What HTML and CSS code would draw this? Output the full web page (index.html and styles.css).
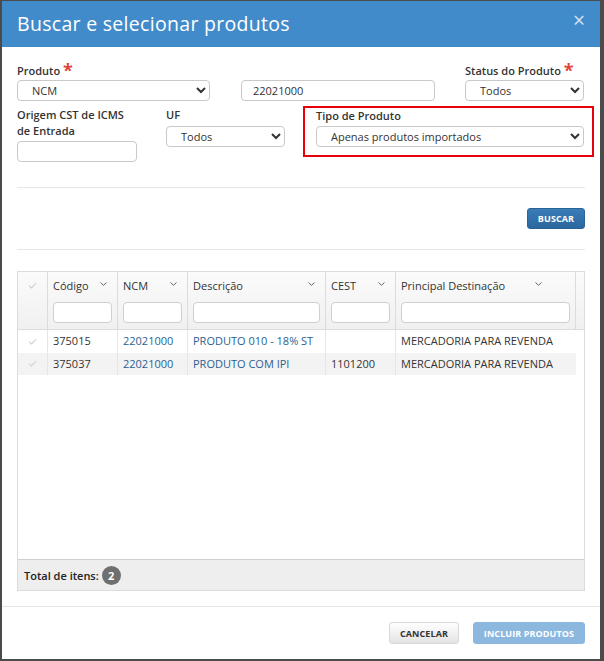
FILE: index.html
```html
<!DOCTYPE html>
<html lang="pt-BR">
<head>
<meta charset="utf-8">
<title>Buscar e selecionar produtos</title>
<link rel="stylesheet" href="styles.css">
</head>
<body>
<div class="modal">
  <div class="modal-header">
    <h1 class="modal-title">Buscar e selecionar produtos</h1>
    <span class="close">&times;</span>
  </div>
  <div class="modal-body">
    <div class="form-row row1">
      <div class="field f-produto">
        <label class="lbl">Produto <span class="req">*</span></label>
        <select class="ctl"><option>NCM</option></select>
      </div>
      <div class="field f-valor">
        <input class="ctl txt" type="text" value="22021000">
      </div>
      <div class="field f-status">
        <label class="lbl">Status do Produto <span class="req">*</span></label>
        <select class="ctl"><option>Todos</option></select>
      </div>
    </div>
    <div class="form-row row2">
      <div class="field f-origem">
        <label class="lbl">Origem CST de ICMS<br>de Entrada</label>
        <input class="ctl txt" type="text">
      </div>
      <div class="field f-uf">
        <label class="lbl">UF</label>
        <select class="ctl"><option>Todos</option></select>
      </div>
      <div class="field f-tipo">
        <label class="lbl">Tipo de Produto</label>
        <select class="ctl"><option>Apenas produtos importados</option></select>
      </div>
    </div>
    <hr class="divider">
    <div class="actions">
      <button class="btn btn-primary">BUSCAR</button>
    </div>
    <hr class="divider">
    <div class="grid">
      <div class="grid-head">
        <div class="hc hc-check"><svg class="chk" viewBox="0 0 10 8" width="9" height="7"><path d="M1 4.2 L3.8 6.8 L9 1.2" fill="none" stroke="#cfcfcf" stroke-width="1.4"/></svg></div>
        <div class="hc"><div class="hc-title"><span>Código</span><svg class="sort" viewBox="0 0 7 4" width="7" height="4"><path d="M0.5 0.5 L3.5 3.3 L6.5 0.5" fill="none" stroke="#666" stroke-width="1"/></svg></div><input class="filter" type="text"></div>
        <div class="hc"><div class="hc-title"><span>NCM</span><svg class="sort" viewBox="0 0 7 4" width="7" height="4"><path d="M0.5 0.5 L3.5 3.3 L6.5 0.5" fill="none" stroke="#666" stroke-width="1"/></svg></div><input class="filter" type="text"></div>
        <div class="hc"><div class="hc-title"><span>Descrição</span><svg class="sort" viewBox="0 0 7 4" width="7" height="4"><path d="M0.5 0.5 L3.5 3.3 L6.5 0.5" fill="none" stroke="#666" stroke-width="1"/></svg></div><input class="filter" type="text"></div>
        <div class="hc"><div class="hc-title"><span>CEST</span><svg class="sort" viewBox="0 0 7 4" width="7" height="4"><path d="M0.5 0.5 L3.5 3.3 L6.5 0.5" fill="none" stroke="#666" stroke-width="1"/></svg></div><input class="filter" type="text"></div>
        <div class="hc hc-wide"><div class="hc-title"><span>Principal Destinação</span><svg class="sort" viewBox="0 0 7 4" width="7" height="4"><path d="M0.5 0.5 L3.5 3.3 L6.5 0.5" fill="none" stroke="#666" stroke-width="1"/></svg></div><input class="filter" type="text"></div>
        <div class="hc hc-scroll"></div>
      </div>
      <div class="grid-body">
        <div class="gr">
          <div class="gc gc-check"><svg class="chk" viewBox="0 0 10 8" width="9" height="7"><path d="M1 4.2 L3.8 6.8 L9 1.2" fill="none" stroke="#d4d4d4" stroke-width="1.4"/></svg></div>
          <div class="gc">375015</div>
          <div class="gc link">22021000</div>
          <div class="gc link">PRODUTO 010 - 18% ST</div>
          <div class="gc"></div>
          <div class="gc">MERCADORIA PARA REVENDA</div>
        </div>
        <div class="gr alt">
          <div class="gc gc-check"><svg class="chk" viewBox="0 0 10 8" width="9" height="7"><path d="M1 4.2 L3.8 6.8 L9 1.2" fill="none" stroke="#d4d4d4" stroke-width="1.4"/></svg></div>
          <div class="gc">375037</div>
          <div class="gc link">22021000</div>
          <div class="gc link">PRODUTO COM IPI</div>
          <div class="gc">1101200</div>
          <div class="gc">MERCADORIA PARA REVENDA</div>
        </div>
      </div>
      <div class="grid-foot">
        <span class="total">Total de itens:</span>
        <span class="badge">2</span>
      </div>
    </div>
  </div>
  <div class="modal-footer">
    <button class="btn btn-default">CANCELAR</button>
    <button class="btn btn-disabled">INCLUIR PRODUTOS</button>
  </div>
</div>
</body>
</html>
```
FILE: styles.css
```css
* { box-sizing: border-box; }
html, body { margin: 0; padding: 0; }
body {
  background: #4b4b4b;
  font-family: "Open Sans", "Noto Sans", "DejaVu Sans", sans-serif;
  font-size: 11px;
  color: #333;
  width: 604px;
  height: 661px;
  overflow: hidden;
  padding: 1px 0 0 2px;
}
.modal {
  width: 598px;
  height: 658px;
  background: #fff;
  display: flex;
  flex-direction: column;
}
.modal-header {
  height: 46px;
  flex: none;
  background: #428bca;
  display: flex;
  align-items: center;
  justify-content: space-between;
  padding: 0 15px 0 15px;
}
.modal-title {
  margin: 0;
  font-weight: 400;
  font-size: 19.5px;
  letter-spacing: 0.3px;
  color: #fff;
  line-height: 46px;
}
.close {
  color: #d2e2f2;
  font-size: 21px;
  font-weight: 400;
  line-height: 1;
  margin-top: -8px;
}
.modal-body {
  flex: 1;
  padding: 16px 15px 15px 15px;
  display: flex;
  flex-direction: column;
}
.form-row { display: flex; align-items: flex-start; }
.field { display: flex; flex-direction: column; }
.lbl {
  font-weight: 600;
  font-size: 11px;
  line-height: 16px;
  color: #333;
  white-space: nowrap;
}
.req {
  color: #e0443a;
  font-size: 18px;
  font-weight: 700;
  line-height: 0;
  position: relative;
  top: 2px;
}
.ctl {
  height: 21px;
  border: 1px solid #c9c9c9;
  border-radius: 4px;
  background: #fff;
  font-family: "Open Sans", "Noto Sans", sans-serif;
  font-size: 11px;
  color: #333;
  margin: 0;
}
select.ctl { padding: 0 4px 0 10px; }
.txt { padding: 0 11px; }
.row1 .lbl { margin-bottom: 1px; }
.f-produto { width: 193px; }
.f-valor { width: 194px; margin-left: 31px; padding-top: 17px; }
.f-status { width: 119px; margin-left: auto; margin-right: 1px; }
.row2 { margin-top: 5px; }
.f-origem { width: 120px; padding-top: 1px; }
.f-origem .lbl { margin-bottom: 2px; }
.f-uf { width: 119px; margin-left: 29px; padding-top: 1px; }
.f-uf .lbl { margin-bottom: 3px; }
.f-tipo {
  width: 291px;
  margin-left: 18px;
  margin-right: -9px;
  border: 2px solid #e8000b;
  padding: 0 8px 8px 11px;
}
.f-tipo .lbl { margin-bottom: 2px; }
.divider {
  border: 0;
  border-top: 1px solid #e6e6e6;
  margin: 25px 0 0 0;
  height: 0;
  flex: none;
}
.actions {
  display: flex;
  justify-content: flex-end;
  margin: 20px 0 20px 0;
}
.actions + .divider { margin-top: 0; }
.btn {
  font-family: "Open Sans", "Noto Sans", sans-serif;
  font-weight: 700;
  font-size: 9px;
  height: 22px;
  border-radius: 3px;
  padding: 0;
  letter-spacing: 0.1px;
}
.btn-primary {
  width: 58px;
  height: 21px;
  color: #fff;
  border: 1px solid #2a6395;
  background: linear-gradient(#3a7cb8, #2b679f);
}
.grid {
  margin-top: 21px;
  height: 320px;
  flex: none;
  border: 1px solid #dcdcdc;
  display: flex;
  flex-direction: column;
}
.grid-head {
  display: grid;
  grid-template-columns: 30px 70px 70px 138px 70px 180px 1fr;
  background: linear-gradient(#fbfbfb, #f0f0f0);
  border-bottom: 1px solid #dcdcdc;
  height: 58px;
}
.hc {
  border-right: 1px solid #dcdcdc;
  padding: 6px 5px 0 5px;
  display: flex;
  flex-direction: column;
}
.hc-scroll { border-right: 0; }
.hc-check { align-items: center; padding: 10px 0 0 0; }
.hc-title {
  display: flex;
  align-items: center;
  justify-content: space-between;
  height: 16px;
  font-size: 11px;
  line-height: 16px;
  padding-right: 5px;
  font-weight: 400;
  color: #333;
}
.hc-wide .hc-title { padding-right: 28px; }
.sort { margin-top: -4px; }
.filter {
  margin-top: 8px;
  height: 21px;
  border: 1px solid #cfcfcf;
  border-radius: 4px;
  background: #fff;
  width: 100%;
}
.grid-body { flex: 1; }
.gr {
  display: grid;
  grid-template-columns: 30px 70px 70px 138px 70px 180px;
  height: 22.5px;
  background: #fff;
  width: 558px;
}
.gr.alt { background: #f3f3f3; }
.gc {
  border-right: 1px solid #e6e6e6;
  padding: 0 5px;
  line-height: 22px;
  font-size: 11px;
  color: #333;
  white-space: nowrap;
  overflow: hidden;
}
.gc:last-child { border-right: 0; }
.gc-check { display: flex; align-items: center; justify-content: center; padding: 0; }
.link { color: #2b5f92; }
.grid-foot {
  height: 31px;
  background: #eeeeee;
  border-top: 1px solid #cfcfcf;
  display: flex;
  align-items: center;
  padding-left: 6px;
}
.total { font-weight: 600; color: #222; font-size: 11px; }
.badge {
  width: 19px;
  height: 19px;
  border-radius: 50%;
  background: #6f6f6f;
  color: #fff;
  font-weight: 700;
  font-size: 11px;
  display: inline-flex;
  align-items: center;
  justify-content: center;
  margin-left: 3px;
}
.modal-footer {
  flex: none;
  border-top: 1px solid #e5e5e5;
  padding: 15px 15px 15px 15px;
  display: flex;
  justify-content: flex-end;
  gap: 14px;
}
.btn-default {
  width: 70px;
  color: #333;
  border: 1px solid #d8d8d8;
  background: linear-gradient(#ffffff, #e3e3e3);
}
.btn-disabled {
  width: 112px;
  color: #fff;
  border: 1px solid #8cb8e0;
  background: #8cb8e0;
}
```
